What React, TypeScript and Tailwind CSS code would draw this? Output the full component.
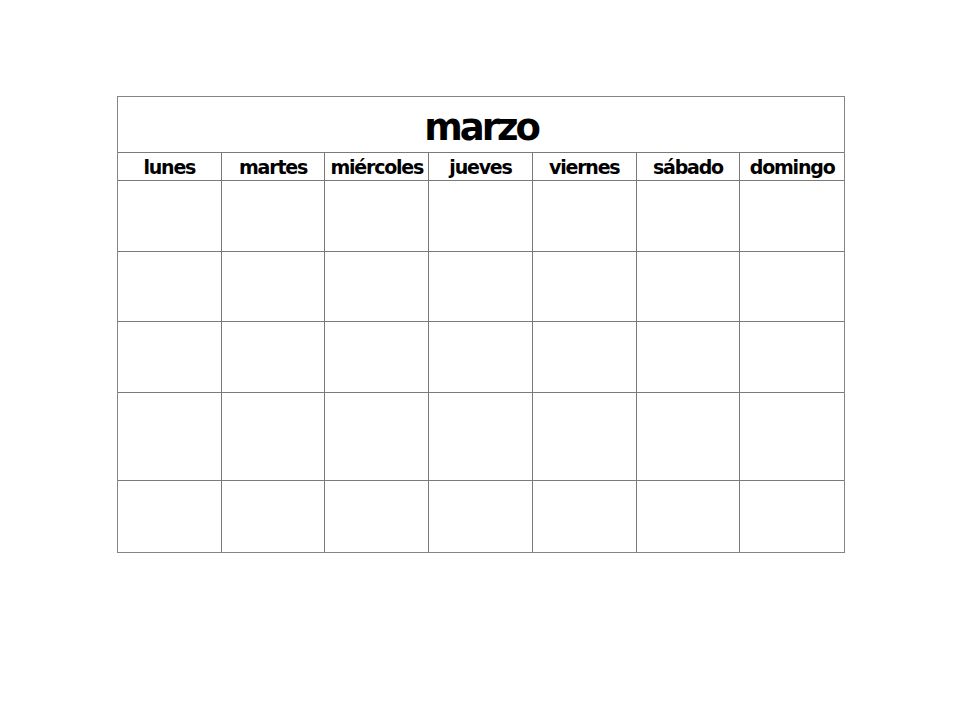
const days = ['lunes', 'martes', 'miércoles', 'jueves', 'viernes', 'sábado', 'domingo'];
const rowHeights = ['h-[71px]', 'h-[70px]', 'h-[71px]', 'h-[88px]', 'h-[71px]'];

export default function App() {
  return (
    <div className="w-[960px] h-[720px] bg-white pt-[96px] pl-[117px]" style={{ fontFamily: '"DejaVu Sans", sans-serif' }}>
      <div className="w-[728px] border border-[#858585]">
        {/* Title */}
        <div className="h-[56px] flex items-center justify-center border-b border-[#7a7a7a]">
          <h1 className="text-[37px] font-bold text-black tracking-[-3px] leading-none pt-[5px]">marzo</h1>
        </div>

        {/* Day names */}
        <div className="grid grid-cols-7 h-[28px] border-b border-[#7a7a7a]">
          {days.map((d, i) => (
            <div
              key={d}
              className={`flex items-center justify-center text-[19px] font-bold text-black tracking-[-1.2px] leading-none pt-[1px] ${
                i < 6 ? 'border-r border-[#7a7a7a]' : ''
              }`}
            >
              {d}
            </div>
          ))}
        </div>

        {/* Weeks */}
        {rowHeights.map((h, r) => (
          <div key={r} className={`grid grid-cols-7 ${h} ${r < 4 ? 'border-b border-[#7a7a7a]' : ''}`}>
            {days.map((d, i) => (
              <div key={d} className={i < 6 ? 'border-r border-[#7a7a7a]' : ''} />
            ))}
          </div>
        ))}
      </div>
    </div>
  );
}
